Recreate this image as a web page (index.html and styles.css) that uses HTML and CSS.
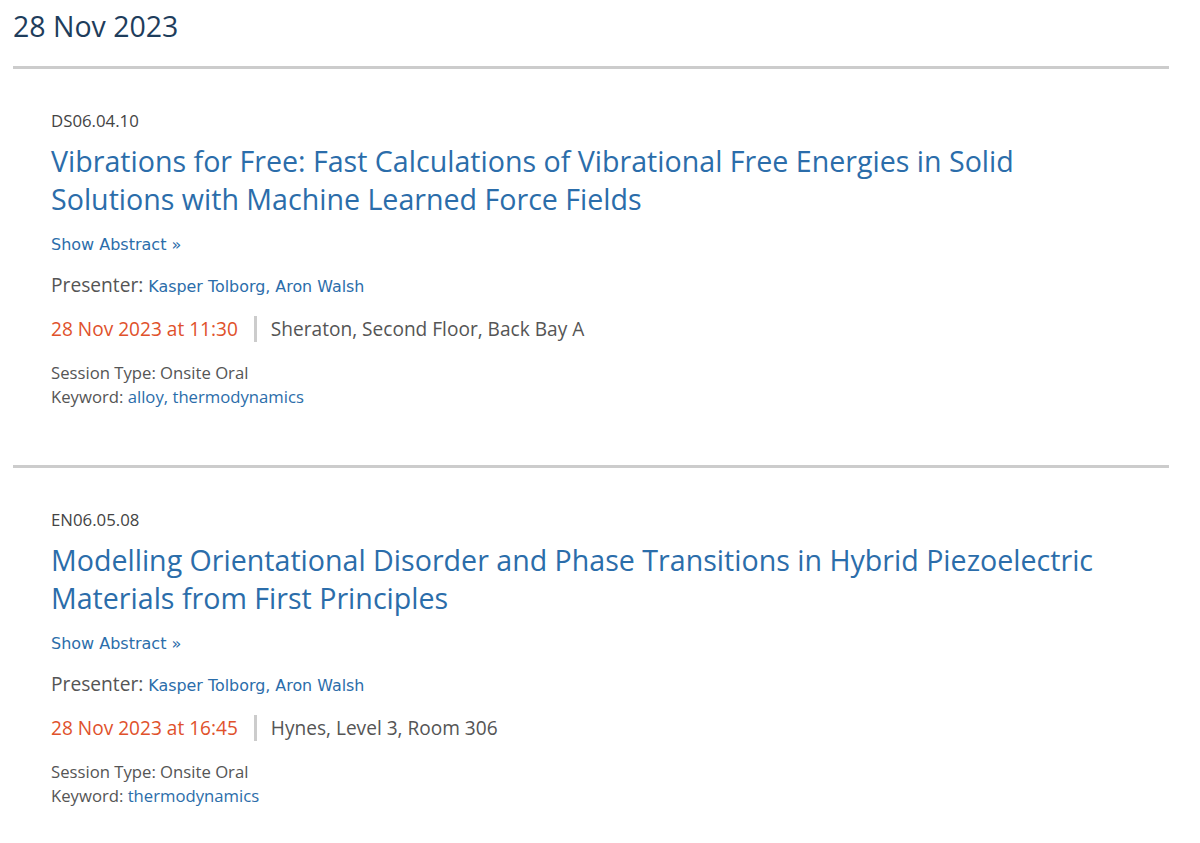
FILE: index.html
```html
<!DOCTYPE html>
<html lang="en">
<head>
<meta charset="utf-8">
<title>28 Nov 2023</title>
<link rel="stylesheet" href="styles.css">
</head>
<body>
<div class="page">
  <h1 class="day-title">28 Nov 2023</h1>
  <div class="talk">
    <div class="code">DS06.04.10</div>
    <h2 class="talk-title"><a href="#">Vibrations for Free: Fast Calculations of Vibrational Free Energies in Solid Solutions with Machine Learned Force Fields</a></h2>
    <a class="show-abstract" href="#">Show Abstract »</a>
    <div class="presenter">Presenter: <span class="names"><a href="#">Kasper Tolborg</a>, <a href="#">Aron Walsh</a></span></div>
    <div class="when-where"><span class="when">28 Nov 2023 at 11:30</span><span class="where">Sheraton, Second Floor, Back Bay A</span></div>
    <div class="meta">
      <div>Session Type: Onsite Oral</div>
      <div>Keyword: <span class="keywords"><a href="#">alloy</a>, <a href="#">thermodynamics</a></span></div>
    </div>
  </div>
  <div class="talk">
    <div class="code">EN06.05.08</div>
    <h2 class="talk-title"><a href="#">Modelling Orientational Disorder and Phase Transitions in Hybrid Piezoelectric Materials from First Principles</a></h2>
    <a class="show-abstract" href="#">Show Abstract »</a>
    <div class="presenter">Presenter: <span class="names"><a href="#">Kasper Tolborg</a>, <a href="#">Aron Walsh</a></span></div>
    <div class="when-where"><span class="when">28 Nov 2023 at 16:45</span><span class="where">Hynes, Level 3, Room 306</span></div>
    <div class="meta">
      <div>Session Type: Onsite Oral</div>
      <div>Keyword: <span class="keywords"><a href="#">thermodynamics</a></span></div>
    </div>
  </div>
</div>
</body>
</html>
```
FILE: styles.css
```css
* { box-sizing: border-box; }
html, body { margin: 0; padding: 0; background: #fff; }
body {
  font-family: "Open Sans", "Noto Sans", sans-serif;
  color: #555;
}
a { color: #2b6daa; text-decoration: none; }
.page {
  padding: 0 31px 0 13px;
}
.day-title {
  margin: 0;
  padding-top: 7px;
  height: 66px;
  font-size: 28.5px;
  line-height: 38px;
  font-weight: 400;
  color: #1e3d5c;
}
.talk {
  border-top: 3px solid #cccccc;
  padding: 42px 38px 50px;
  height: 399px;
}
.code {
  font-size: 16.8px;
  line-height: 20px;
  color: #444;
}
.talk-title {
  margin: 11px 0 0;
  font-size: 28.6px;
  line-height: 38px;
  font-weight: 400;
}
.show-abstract {
  display: inline-block;
  margin-top: 16px;
  font-family: "DejaVu Sans", "Open Sans", sans-serif;
  font-size: 16px;
  line-height: 22px;
}
.presenter {
  margin-top: 17px;
  font-size: 19.2px;
  line-height: 24px;
}
.names {
  color: #2b6daa;
  font-family: "DejaVu Sans", "Open Sans", sans-serif;
  font-size: 15.9px;
}
.when-where {
  display: flex;
  align-items: center;
  margin-top: 17px;
  font-size: 19.1px;
  line-height: 26px;
}
.when { color: #e0512b; }
.where {
  margin-left: 16px;
  padding-left: 14px;
  border-left: 3px solid #cccccc;
}
.meta {
  margin-top: 19px;
  font-size: 16.7px;
  line-height: 24px;
}
.keywords { color: #2b6daa; }
```
